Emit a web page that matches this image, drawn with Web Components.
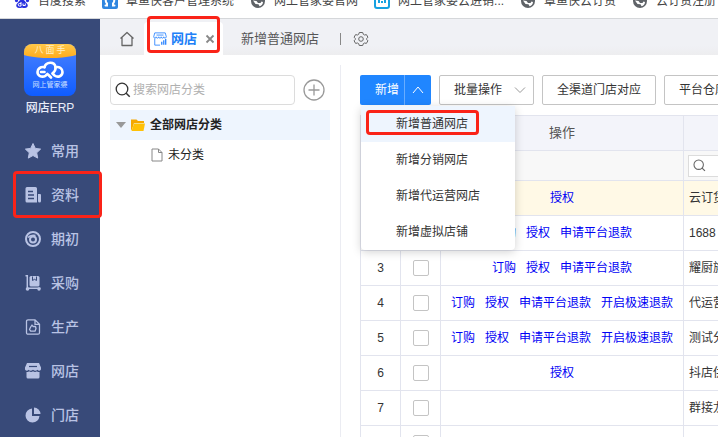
<!DOCTYPE html>
<html lang="zh-CN">
<head>
<meta charset="utf-8">
<meta name="viewport" content="width=device-width, initial-scale=1">
<title>网店ERP</title>
<style>
  html, body {
    margin: 0;
    height: 100%;
    overflow: hidden;
    background: #fff;
    color: #333;
    font: 12px/16px "Liberation Sans", "Noto Sans CJK SC", sans-serif;
  }
</style>
</head>
<body>

<erp-app></erp-app>

<script>
(function () {

  const svg = (box, size, body) =>
    `<svg viewBox="0 0 ${box} ${box}" width="${size}" height="${size}" fill="none" aria-hidden="true">${body}</svg>`;

  const icons = {
    baidu: svg(16, 16, `
      <g fill="#2a32e0">
        <ellipse cx="2.5" cy="7" rx="1.7" ry="2.2"/><ellipse cx="6" cy="3" rx="1.6" ry="2.3"/>
        <ellipse cx="10" cy="3" rx="1.6" ry="2.3"/><ellipse cx="13.5" cy="7" rx="1.7" ry="2.2"/>
        <path d="M8 6.500c2 0 3 2 4.500 3.500 2.500 2.500 1 5-1.500 5-1.500 0-2-.3-3-.3s-1.500.3-3 .3c-2.500 0-4-2.500-1.500-5C5 8.500 6 6.500 8 6.500z"/>
      </g>
      <path d="M7 9v4H5.500a1 1 0 0 1 0-2.500H7M9 10.500v2h2.300v-2" stroke="#fff"/>`),
    octopus: svg(16, 16, `
      <rect width="16" height="16" rx="2" fill="#2f86e0"/>
      <path d="M3.500 12.500h1.500v-2C2.500 8 4 4 8 4s5.500 4 3 6.500v2h1.500" stroke="#fff" stroke-width="2" stroke-linecap="round"/>`),
    cloud: svg(16, 16, `
      <rect x="1" y="1" width="14" height="14" rx="2" stroke="#17a1e0" stroke-width="2"/>
      <path d="M5 5v5M11 5v5M8 8v2" stroke="#17a1e0" stroke-width="2"/>`),
    globe: svg(16, 16, `
      <circle cx="8" cy="8" r="7" fill="#5f6368"/>
      <path d="M8.500 3.500c1.500-.5 3 .2 4 1.300l-1 2.200-2-.5zM3 7.500l3.500.5 1.500 2h2.500l1-1.500 1.500.5c0 2-1.500 4-3.500 4.300l-1-2L5.500 11z" fill="#fff"/>`),
    home: svg(16, 16, `<path d="M1.500 7.500 8 1.500l6.500 6M3 6.500v8h10v-8" stroke="#666" stroke-width="1.300" stroke-linejoin="round"/>`),
    gear: svg(16, 16, `
      <path d="M6.300 1.500h3.400l.6 1.800 1.200.7 1.900-.4 1.500 2.600-1.200 1.300v1l1.200 1.300-1.500 2.600-1.900-.4-1.200.7-.6 1.800H6.300l-.6-1.800-1.200-.7-1.900.4-1.500-2.600L2.300 8.500v-1L1.100 6.200l1.500-2.600 1.900.4 1.200-.7z" stroke="#666" stroke-linejoin="round"/>
      <circle cx="8" cy="8" r="2.300" stroke="#666"/>`),
    tabShop: svg(16, 14, `
      <path d="M2 1h12l1.200 4.500c0 2-2.900 2-2.900 0 0 2-2.900 2-2.900 0 0 2-2.900 2-2.900 0 0 2-2.900 2-2.900 0 0 2-2.800 2-2.800 0zM2 7.500V15h6M4 3.500h8" stroke="#2e86ff"/>
      <path d="M10 14.500V11M12.300 14.500V9.500M14.500 14.500V8" stroke="#2e86ff" stroke-width="1.500"/>`),
    close: svg(10, 10, `<path d="m1.500 1.500 7 7m0-7-7 7" stroke="#888" stroke-width="1.800"/>`),
    star: svg(16, 16, `<path d="m8 .5 2.300 4.900 5.300.7-3.900 3.700 1 5.300L8 12.500l-4.700 2.600 1-5.300L.4 6.100l5.300-.7z" fill="#b9c3e4" stroke="#b9c3e4" stroke-linejoin="round"/>`),
    doc: svg(16, 16, `
      <path d="M2 0h8.500a1.500 1.500 0 0 1 1.500 1.500V15.500H2A1.500 1.500 0 0 1 .5 14V1.500A1.500 1.500 0 0 1 2 0zM13 7h2a1 1 0 0 1 1 1v6a1.500 1.500 0 0 1-3 0z" fill="#b9c3e4"/>
      <path d="M3 4.500h5M3 8h6M3 11.500h6" stroke="#384a79" stroke-width="1.300"/>`),
    target: svg(16, 16, `
      <circle cx="8" cy="8" r="7" stroke="#b9c3e4" stroke-width="2"/>
      <circle cx="8" cy="8.500" r="3" stroke="#b9c3e4" stroke-width="2"/>
      <path d="M3 6.500C5 4 8 4 10.500 4.500" stroke="#b9c3e4" stroke-width="1.500"/>`),
    cart: svg(16, 16, `
      <path d="M.5.8h1.800v12.400H15.500" stroke="#b9c3e4" stroke-width="1.500"/>
      <circle cx="2.500" cy="14" r="1.800" fill="#b9c3e4"/><circle cx="14" cy="14" r="1.700" fill="#b9c3e4"/>
      <rect x="4.500" y="1" width="10" height="10.500" rx="1.500" fill="#b9c3e4"/>
      <path d="M7.500 1.500v4l2-1.200 2 1.200v-4" stroke="#384a79"/>`),
    produce: svg(16, 16, `
      <path d="M3 .8h7l4.500 4.500v8.400a1.500 1.500 0 0 1-1.500 1.500H3a1.500 1.500 0 0 1-1.500-1.500V2.300A1.500 1.500 0 0 1 3 .8zM10 .8v4.500h4.500" stroke="#b9c3e4" stroke-width="1.300"/>
      <path d="M7 6l1 1.500h2.500L11 9.500l-1 2.700H5.700l-1.200-1.700L5.700 8z" stroke="#b9c3e4" stroke-width="1.300" stroke-linejoin="round"/>`),
    shop: svg(16, 16, `
      <path d="M2 0h12l2 4.500v2c-1 1.500-2.500 1.500-3.500.3-1.200 1.200-3 1.200-4.500 0-1.500 1.200-3.300 1.200-4.500 0C2.500 8 1 8 0 6.500v-2z" fill="#b9c3e4"/>
      <path d="M1.500 9c1 .2 1.800-.1 2.500-.8 1.200 1 3 1 4 0 1 1 3 1 4 0 .7.700 1.500 1 2.500.8v5a1.500 1.500 0 0 1-1.500 1.500H3a1.500 1.500 0 0 1-1.500-1.500z" fill="#b9c3e4"/>
      <path d="M4 3.500h8" stroke="#384a79" stroke-width="1.200"/>`),
    pie: svg(16, 16, `<path d="M7 1.500v7.500h7.500A7 7 0 1 1 7 1.500z" fill="#b9c3e4"/><path d="M9 .5A6.800 6.800 0 0 1 15.500 7H9z" fill="#b9c3e4"/>`),
    search: svg(16, 16, `<circle cx="7" cy="7" r="5.800" stroke="currentColor" stroke-width="1.300"/><path d="m11.200 11.200 3.500 3.500" stroke="currentColor" stroke-width="1.500"/>`),
    plus: svg(22, 22, `<circle cx="11" cy="11" r="10" stroke="#999" stroke-width="1.300"/><path d="M11 5.500v11M5.500 11h11" stroke="#999" stroke-width="1.300"/>`),
    caret: svg(10, 10, `<path d="M0 2h10L5 8z" fill="#999"/>`),
    folder: svg(14, 14, `<path d="M0 1.500h5.500L7 3h6v2H3L1 11.500 0 12z" fill="#f5a800"/><path d="M3 5.500h11L12.500 13H.5z" fill="#ffc107"/>`),
    file: svg(14, 14, `<path d="M2 1h6.500L12 4.500V13H2zM8.500 1v3.500H12" stroke="#888" stroke-linejoin="round"/>`),
    up: svg(12, 12, `<path d="m1 9 5-6 5 6" stroke="#fff"/>`),
    down: svg(12, 12, `<path d="m1 3.500 5 5 5-5" stroke="#999"/>`)
  };

  const base = `
    *{ box-sizing:border-box; }
    svg{ display:block; flex:none; }
    a{ color:inherit; text-decoration:none; }
    button{ font:inherit; color:inherit; background:none; border:0; padding:0; margin:0; }
  `;

  function define(name, styles, markup) {
    customElements.define(name, class extends HTMLElement {
      constructor() {
        super();
        this.attachShadow({ mode: "open" });
      }

      connectedCallback() {
        const html = typeof markup === "function" ? markup(this) : markup;
        this.shadowRoot.innerHTML = `<style>${base}${styles}</style>${html}`;
      }
    });
  }

  // red frame laid over its positioned parent
  define("focus-frame", `
    :host{
      position:absolute;
      inset:var(--frame-inset, 0);
      border:3px solid #fa2318;
      border-radius:4px;
      pointer-events:none;
      z-index:5;
    }
  `, "");

  define("bookmark-link", `
    :host{ display:block; flex:none; }
    a{ display:flex; gap:8px; align-items:center; color:#444; white-space:nowrap; }
  `, el => `<a href="#">${icons[el.getAttribute("icon")]}<span><slot></slot></span></a>`);

  define("bookmark-bar", `
    :host{
      display:flex;
      flex:none;
      align-items:flex-end;
      gap:16px;
      height:19px;
      padding:0 14px 9px;
      overflow:hidden;
      background:#fff;
      border-bottom:1px solid #d5d7da;
    }
  `, `<slot></slot>`);

  define("nav-item", `
    :host{ display:block; position:relative; }
    a{
      display:flex;
      align-items:center;
      gap:10px;
      height:44px;
      padding-left:25px;
      font-size:14px;
      font-weight:500;
      color:#b9c3e4;
    }
    focus-frame{ --frame-inset:-2px -2px -1px 13px; }
  `, el => `
    <a href="#">${icons[el.getAttribute("icon")]}<span><slot></slot></span></a>
    ${el.hasAttribute("framed") ? "<focus-frame></focus-frame>" : ""}
  `);

  define("side-bar", `
    :host{
      display:flex;
      flex-direction:column;
      flex:none;
      width:100px;
      padding-top:25px;
      background:#384a79;
      position:relative;
      z-index:2;
    }
    .logo{
      display:flex;
      flex-direction:column;
      align-items:center;
      align-self:center;
      width:52px;
      height:52px;
      border-radius:8px;
      overflow:hidden;
      background:linear-gradient(#4b83ff, #0f5cff);
      color:#fff;
    }
    .ribbon{
      display:flex;
      flex:none;
      justify-content:center;
      gap:2px;
      width:64px;
      height:14px;
      border-radius:0 0 50% 50%;
      background:linear-gradient(#ffc84a, #ffab1c);
      font-size:9px;
      line-height:13px;
      color:#fff0c4;
    }
    .logo svg{ margin-top:3px; }
    .brand{ font-size:7px; line-height:12px; color:#cfe0ff; }
    .name{
      margin:4px 0 13px;
      text-align:center;
      font-size:12px;
      line-height:16px;
      font-weight:500;
      color:#e8ecf8;
    }
    nav{ display:flex; flex-direction:column; }
  `, `
    <div class="logo">
      <div class="ribbon"><span>八</span><span>面</span><span>手</span></div>
      <svg viewBox="0 0 28 18" width="28" height="18" fill="none" stroke="#fff" stroke-width="2.600" stroke-linecap="round" aria-hidden="true">
        <path d="M8.500 11H5M8.500 6.200C4.500 5.200 1.500 8 1.500 11c0 3.500 4 6 8 3.800l2-1.800"/>
        <path d="M8.500 6.200C10 .5 18.500.2 19.500 6c.4 2.500-.8 4.500-2.500 6"/>
        <path d="M19.500 6.200c4-1 7 1.600 7 4.800 0 4-4.500 6-8 3.500l-2-2M12.500 14l2.500 2.500"/>
      </svg>
      <div class="brand">网上管家婆</div>
    </div>
    <div class="name">网店ERP</div>
    <nav><slot></slot></nav>
  `);

  define("tab-strip", `
    :host{
      display:flex;
      flex:none;
      align-items:flex-end;
      height:36px;
      background:linear-gradient(#f0f1f5 75%, #ededef);
      color:#555;
      font-size:13px;
    }
    a, .tab, .tools{ display:flex; align-items:center; height:33px; white-space:nowrap; }
    .home{ padding:0 9px 0 19px; }
    .tab{
      position:relative;
      width:79px;
      padding-left:9px;
      background:#fff;
      border-radius:4px 4px 0 0;
      color:#2080f7;
      font-weight:700;
    }
    .tab a{ gap:4px; }
    .tab button{ margin-left:8px; }
    .plain{ padding:0 21px 0 18px; }
    .tools{ gap:12px; }
    .rule{ width:1px; height:12px; background:#888; }
    focus-frame{ --frame-inset:-6px 3px 2px 3px; }
  `, `
    <a class="home" href="#" aria-label="首页">${icons.home}</a>
    <div class="tab">
      <a href="#">${icons.tabShop}<span>网店</span></a>
      <button type="button" aria-label="关闭">${icons.close}</button>
      <focus-frame></focus-frame>
    </div>
    <a class="plain" href="#">新增普通网店</a>
    <div class="tools">
      <span class="rule"></span>
      <button type="button" aria-label="设置">${icons.gear}</button>
    </div>
  `);

  define("search-box", `
    :host{ display:block; flex:1; min-width:0; }
    label{
      display:flex;
      align-items:center;
      gap:2px;
      height:var(--box-height, 30px);
      padding:0 4px;
      background:#fff;
      border:1px solid #dcdcdc;
      border-radius:var(--box-radius, 4px);
      color:var(--icon-color, #333);
    }
    svg{ width:var(--icon-size, 16px); height:var(--icon-size, 16px); }
    input{
      flex:1;
      min-width:0;
      padding:0;
      border:0;
      outline:0;
      background:none;
      font:inherit;
      color:#333;
    }
    input::placeholder{ color:#b0b0b0; opacity:1; }
  `, el => `
    <label>${icons.search}<input type="text" aria-label="${el.getAttribute("label")}" placeholder="${el.getAttribute("placeholder") || ""}"></label>
  `);

  define("category-panel", `
    :host{
      display:block;
      flex:none;
      width:241px;
      padding:10px 10px 0;
      border-right:1px solid #ebecf2;
    }
    .find{ display:flex; align-items:center; gap:8px; margin-bottom:5px; }
    .find button{ margin-right:5px; }
    ul{ list-style:none; margin:0; padding:0; }
    .node{ display:flex; align-items:center; gap:5px; height:30px; color:#222; }
    .root{ padding-left:6px; background:#eef5fe; }
    .leaf{ padding-left:40px; gap:4px; }
  `, `
    <div class="find">
      <search-box label="搜索网店分类" placeholder="搜索网店分类"></search-box>
      <button type="button" aria-label="新增分类">${icons.plus}</button>
    </div>
    <ul>
      <li>
        <a class="node root" href="#">${icons.caret}${icons.folder}<b>全部网店分类</b></a>
        <ul><li><a class="node leaf" href="#">${icons.file}<span>未分类</span></a></li></ul>
      </li>
    </ul>
  `);

  define("tool-button", `
    :host{ display:block; flex:none; }
    button{
      display:flex;
      align-items:center;
      height:30px;
      padding:0 14px;
      background:#fff;
      border:1px solid #c4c4c4;
      border-radius:2px;
      white-space:nowrap;
    }
    .drop{ padding-right:7px; gap:12px; }
  `, el => el.hasAttribute("drop")
    ? `<button type="button" class="drop"><slot></slot>${icons.down}</button>`
    : `<button type="button"><slot></slot></button>`);

  define("add-menu", `
    :host{ display:block; flex:none; position:relative; z-index:3; }
    .split{
      display:flex;
      height:30px;
      background:#2086ff;
      border-radius:2px;
      color:#fff;
    }
    .add{ padding:0 5px 0 15px; width:44px; white-space:nowrap; }
    .more{
      display:flex;
      align-items:center;
      justify-content:center;
      width:27px;
      border-left:1px solid #68adff;
    }
    .menu{
      position:absolute;
      top:31px;
      left:1px;
      width:154px;
      background:#fff;
      border-radius:4px;
      box-shadow:0 2px 10px rgba(0,0,0,0.18);
    }
    .menu button{
      display:block;
      width:100%;
      height:36px;
      padding-left:35px;
      text-align:left;
    }
    .first{ position:relative; background:#eef5fe; }
    focus-frame{ --frame-inset:4px 36px 7px 5px; }
  `, `
    <div class="split">
      <button type="button" class="add">新增</button>
      <button type="button" class="more" aria-label="更多新增" aria-expanded="true">${icons.up}</button>
    </div>
    <div class="menu">
      <div class="first">
        <button type="button">新增普通网店</button>
        <focus-frame></focus-frame>
      </div>
      <button type="button">新增分销网店</button>
      <button type="button">新增代运营网店</button>
      <button type="button">新增虚拟店铺</button>
    </div>
  `);

  const rows = [
    { ops: ["授权"], name: "云订货", active: true },
    { ops: ["订购", "授权", "申请平台退款"], name: "1688" },
    { ops: ["订购", "授权", "申请平台退款"], name: "耀厨旗舰店" },
    { ops: ["订购", "授权", "申请平台退款", "开启极速退款"], name: "代运营网店" },
    { ops: ["订购", "授权", "申请平台退款", "开启极速退款"], name: "测试分销网店" },
    { ops: ["授权"], name: "抖店供应商" },
    { ops: [], name: "群接龙" },
    { ops: [], name: "" }
  ];

  define("shop-table", `
    :host{ display:block; }
    table{
      width:100%;
      min-width:520px;
      table-layout:fixed;
      border-collapse:collapse;
    }
    th, td{
      height:35px;
      padding:0;
      border:1px solid #e2e4ee;
      text-align:center;
      font-weight:400;
      white-space:nowrap;
    }
    .no{ width:40px; }
    .check{ width:40px; }
    .ops{ width:243px; }
    thead th{ background:#f3f4fa; font-size:13px; color:#555; }
    .filter td{ height:30px; background:#f8f8f8; padding:0 4px; }
    .active td{ background:#fff9e6; }
    td.name{ padding-left:5px; text-align:left; }
    .links{ display:flex; justify-content:center; gap:10px; }
    .links a{ color:#0000f5; }
    input[type=checkbox]{
      appearance:none;
      display:block;
      width:16px;
      height:16px;
      margin:0 auto;
      border:1px solid #c4c4c4;
      border-radius:2px;
      background:#fff;
    }
    search-box{ --box-height:22px; --box-radius:0; --icon-size:13px; --icon-color:#666; }
  `, () => {

    let body = "";

    rows.forEach((row, i) => {
      body += `
      <tr class="${row.active ? "active" : ""}">
        <td>${i + 1}</td>
        <td><input type="checkbox" aria-label="选择第${i + 1}行"></td>
        <td><div class="links">${row.ops.map(op => `<a href="#">${op}</a>`).join("")}</div></td>
        <td class="name">${row.name}</td>
      </tr>`;
    });

    return `
    <table>
      <colgroup><col class="no"><col class="check"><col class="ops"><col></colgroup>
      <thead>
        <tr><th></th><th></th><th>操作</th><th>网店名称</th></tr>
      </thead>
      <tbody>
        <tr class="filter"><td></td><td></td><td></td><td><search-box label="网店名称"></search-box></td></tr>
        ${body}
      </tbody>
    </table>`;
  });

  define("shop-list", `
    :host{
      display:block;
      flex:1;
      min-width:0;
      padding:10px 0 0 19px;
      overflow:hidden;
    }
    .bar{ display:flex; gap:8px; margin-bottom:10px; }
  `, `
    <div class="bar">
      <add-menu></add-menu>
      <tool-button drop>批量操作</tool-button>
      <tool-button>全渠道门店对应</tool-button>
      <tool-button>平台仓库对应</tool-button>
    </div>
    <shop-table></shop-table>
  `);

  define("erp-app", `
    :host{ display:flex; flex-direction:column; height:100vh; overflow:hidden; }
    .shell{ display:flex; flex:1; min-height:0; }
    .page{ display:flex; flex-direction:column; flex:1; min-width:0; }
    main{ display:flex; flex:1; min-height:0; padding-top:10px; }
  `, `
    <bookmark-bar>
      <bookmark-link icon="baidu">百度搜索</bookmark-link>
      <bookmark-link icon="octopus">章鱼侠客户管理系统</bookmark-link>
      <bookmark-link icon="globe">网上管家婆官网</bookmark-link>
      <bookmark-link icon="cloud">网上管家婆云进销...</bookmark-link>
      <bookmark-link icon="globe">章鱼侠云订货</bookmark-link>
      <bookmark-link icon="globe">云订货注册</bookmark-link>
    </bookmark-bar>
    <div class="shell">
      <side-bar>
        <nav-item icon="star">常用</nav-item>
        <nav-item icon="doc" framed>资料</nav-item>
        <nav-item icon="target">期初</nav-item>
        <nav-item icon="cart">采购</nav-item>
        <nav-item icon="produce">生产</nav-item>
        <nav-item icon="shop">网店</nav-item>
        <nav-item icon="pie">门店</nav-item>
      </side-bar>
      <div class="page">
        <tab-strip></tab-strip>
        <main>
          <category-panel></category-panel>
          <shop-list></shop-list>
        </main>
      </div>
    </div>
  `);

})();
</script>
</body>
</html>
